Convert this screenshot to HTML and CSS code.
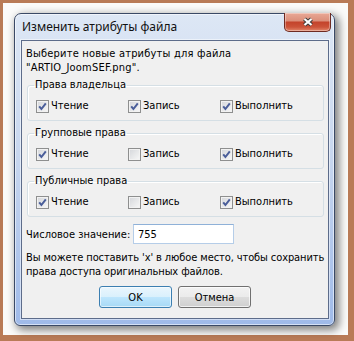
FILE: index.html
```html
<!DOCTYPE html>
<html lang="ru">
<head>
  <meta charset="UTF-8">
  <meta name="viewport" content="width=device-width, initial-scale=1.0">
  <title>Изменить атрибуты файла</title>
  <link rel="stylesheet" href="styles.css">
</head>
<body>
  <div class="photo">
    <div class="mat">
      <div class="window">
        <div class="titlebar">
          <span class="title">Изменить атрибуты файла</span>
          <button class="close" type="button" aria-label="Закрыть">
            <svg width="14" height="10" viewBox="0 0 14 10">
              <path d="M3.5 2 L10.5 8 M10.5 2 L3.5 8" stroke="#3b3b3b" stroke-width="4.2" fill="none"/>
              <path d="M3.5 2 L10.5 8 M10.5 2 L3.5 8" stroke="#ffffff" stroke-width="2.2" fill="none"/>
            </svg>
          </button>
        </div>

        <div class="client">
          <p class="intro">Выберите новые атрибуты для файла<br>"ARTIO_JoomSEF.png".</p>

          <fieldset class="group">
            <legend>Права владельца</legend>
            <div class="perms">
              <label class="check"><span class="box on"></span>Чтение</label>
              <label class="check"><span class="box on"></span>Запись</label>
              <label class="check"><span class="box on"></span>Выполнить</label>
            </div>
          </fieldset>

          <fieldset class="group">
            <legend>Групповые права</legend>
            <div class="perms">
              <label class="check"><span class="box on"></span>Чтение</label>
              <label class="check"><span class="box"></span>Запись</label>
              <label class="check"><span class="box on"></span>Выполнить</label>
            </div>
          </fieldset>

          <fieldset class="group">
            <legend>Публичные права</legend>
            <div class="perms">
              <label class="check"><span class="box on"></span>Чтение</label>
              <label class="check"><span class="box"></span>Запись</label>
              <label class="check"><span class="box on"></span>Выполнить</label>
            </div>
          </fieldset>

          <div class="numeric">
            <span class="numeric-label">Числовое значение:</span>
            <input class="numeric-input" type="text" value="755">
          </div>

          <p class="note">Вы можете поставить 'x' в любое место, чтобы сохранить<br>права доступа оригинальных файлов.</p>

          <div class="buttons">
            <button class="btn default" type="button">OK</button>
            <button class="btn" type="button">Отмена</button>
          </div>
        </div>
      </div>
    </div>
  </div>
</body>
</html>
```

FILE: styles.css
```css
body {
  margin: 0;
  width: 354px;
  height: 341px;
  overflow: hidden;
  background-color: #b97b57;
  font-family: "DejaVu Sans Condensed", "DejaVu Sans", sans-serif;
  font-size: 11px;
  color: #000;
}
.photo {
  box-sizing: border-box;
  width: 354px;
  height: 341px;
  padding: 3px 6px 6px 3px;
}
.mat {
  box-sizing: border-box;
  height: 100%;
  padding: 10px 0 0 11px;
  background-color: #fbfbfa;
}
.window {
  box-sizing: border-box;
  width: 321px;
  height: 313px;
  display: flex;
  flex-direction: column;
  padding: 0 5px 6px 6px;
  border: 1px solid #3a4966;
  border-radius: 7px 7px 6px 6px;
  background: linear-gradient(#dde7f5, #c8d7ef 45%, #9fbae9);
  box-shadow: 3px 3px 9px 1px rgba(0, 0, 0, 0.5), inset 0 0 0 1px rgba(255, 255, 255, 0.55);
}
.titlebar {
  flex: none;
  height: 26px;
  display: flex;
  align-items: flex-start;
  justify-content: space-between;
}
.title {
  margin-top: 5px;
  padding-left: 1px;
  font-family: "Noto Sans", sans-serif;
  font-size: 12px;
  line-height: 16px;
  color: #111;
}
.close {
  width: 47px;
  height: 19px;
  margin: -1px -2px 0 0;
  padding: 0;
  display: flex;
  align-items: center;
  justify-content: center;
  border: 1px solid #6e2b22;
  border-top: none;
  border-radius: 0 0 5px 5px;
  background: linear-gradient(#e9a896 0%, #dc907b 42%, #c4442c 52%, #cc5339 78%, #e2876b 100%);
  box-shadow: inset 0 0 0 1px rgba(255, 255, 255, 0.35);
}
.client {
  flex: 1;
  min-height: 0;
  overflow: hidden;
  display: flex;
  flex-direction: column;
  border: 1px solid #5d6c8a;
  background-color: #f0f0f0;
  box-shadow: 0 0 0 1px rgba(255, 255, 255, 0.5);
}
.intro {
  margin: 6px 0 0 4px;
  line-height: 14px;
  white-space: nowrap;
  letter-spacing: 0.2px;
}
.group {
  margin: 3px 4px 0 5px;
  padding: 7px 0 7px 8px;
  border: 1px solid #d5dfe5;
  border-radius: 3px;
  box-shadow: inset 1px 1px 0 #fff;
  min-width: 0;
}
.group + .group {
  margin-top: 5px;
}
.group legend {
  margin-left: -2px;
  padding: 0 1px;
  line-height: 14px;
}
.perms {
  display: grid;
  grid-template-columns: 92px 92px 92px;
}
.check {
  display: flex;
  align-items: center;
  gap: 2px;
  line-height: 14px;
}
.box {
  box-sizing: border-box;
  width: 13px;
  height: 13px;
  border: 1px solid #8e8f8f;
  background: linear-gradient(135deg, #d4d6da, #f8f8f8);
  box-shadow: inset 0 0 0 1px #f2f2f2;
}
.box.on {
  background: url("data:image/svg+xml,%3Csvg xmlns='http://www.w3.org/2000/svg' width='11' height='11' viewBox='0 0 11 11'%3E%3Cpath d='M2.2 5.4 L4.4 8 L8.8 2.3' stroke='%234a5e9a' stroke-width='2' fill='none'/%3E%3C/svg%3E") center no-repeat,
    linear-gradient(135deg, #d4d6da, #f8f8f8);
}
.numeric {
  margin: 7px 0 0 4px;
  display: flex;
  align-items: center;
}
.numeric-label {
  width: 107px;
}
.numeric-input {
  box-sizing: border-box;
  width: 101px;
  height: 20px;
  padding: 0 4px;
  border: 1px solid #b5cde8;
  border-top-color: #8fb1d8;
  font-family: inherit;
  font-size: 11px;
  background: #fff;
  outline: none;
}
.note {
  margin: 7px 0 0 4px;
  line-height: 14px;
  white-space: nowrap;
  letter-spacing: -0.1px;
}
.buttons {
  margin-top: 7px;
  display: flex;
  justify-content: center;
  gap: 6px;
}
.btn {
  width: 73px;
  height: 22px;
  padding: 0;
  border: 1px solid #707070;
  border-radius: 3px;
  font-family: inherit;
  font-size: 11px;
  color: #000;
  background: linear-gradient(#f2f2f2 0%, #ebebeb 50%, #dddddd 50%, #cfcfcf 100%);
  box-shadow: inset 0 0 0 1px rgba(255, 255, 255, 0.7);
}
.btn.default {
  border-color: #3c7fb1;
  background: linear-gradient(#eaf6fd 0%, #d9f0fc 50%, #bee6fd 50%, #a7d9f5 100%);
  box-shadow: inset 0 0 0 1px rgba(255, 255, 255, 0.6);
}
```
